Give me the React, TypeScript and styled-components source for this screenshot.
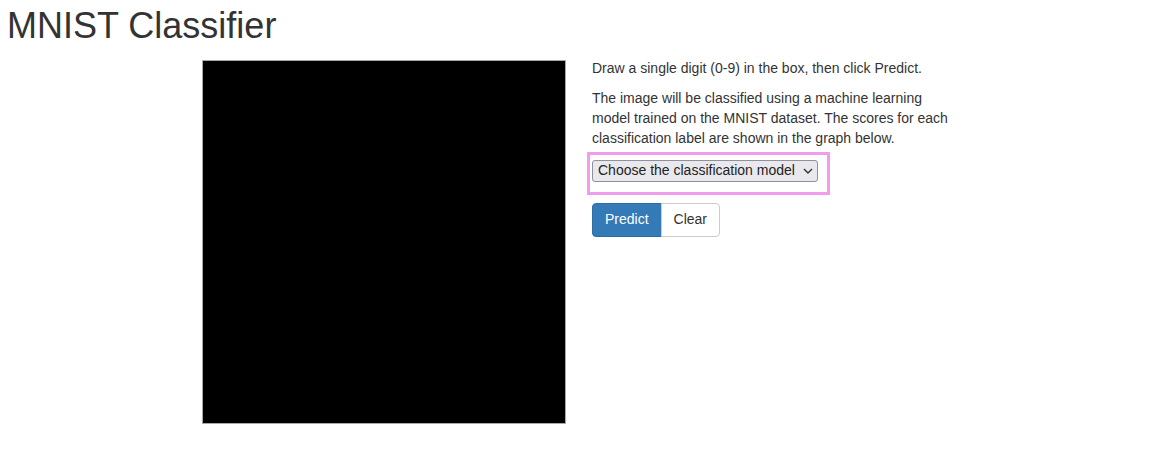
import styled, { createGlobalStyle } from "styled-components";

const GlobalStyle = createGlobalStyle`
  body {
    margin: 0;
    background: #fff;
    font-family: "Liberation Sans", Arial, sans-serif;
    font-size: 14px;
    line-height: 1.42857;
    color: #333;
  }
`;

const Page = styled.div`
  padding: 0 6px;
`;

const Title = styled.h1`
  margin: 6px 0 14px 1px;
  font-size: 36px;
  font-weight: 500;
  line-height: 1.1;
  color: #333;
`;

const Row = styled.div`
  display: flex;
  justify-content: center;
  gap: 26px;
`;

const Canvas = styled.div`
  width: 362px;
  height: 362px;
  background: #000;
  border: 1px solid #a8a8a8;
  flex: none;
`;

const Side = styled.div`
  width: 360px;
  flex: none;
  margin-top: -1px;
`;

const Text = styled.p`
  margin: 0 0 10px;
`;

const Highlight = styled.div`
  position: relative;
  width: 226px;
  margin: 11px 0 21px;

  &::after {
    content: "";
    position: absolute;
    top: -8px;
    left: -5px;
    right: -12px;
    bottom: -13px;
    border: 3px solid #f29cf0;
    pointer-events: none;
  }
`;

const Select = styled.div`
  display: flex;
  align-items: center;
  justify-content: space-between;
  box-sizing: border-box;
  width: 226px;
  height: 22px;
  padding: 0 4px 0 5px;
  background: #e9e9ed;
  border: 1px solid #8f8f9d;
  border-radius: 3px;
  font-size: 14px;
  color: #222;
  white-space: nowrap;
`;

const BtnGroup = styled.div`
  display: flex;
`;

const Button = styled.button<{ $primary?: boolean }>`
  font-family: inherit;
  font-size: 14px;
  line-height: 1.42857;
  padding: 6px 12px;
  border: 1px solid ${(p) => (p.$primary ? "#2e6da4" : "#ccc")};
  background: ${(p) => (p.$primary ? "#337ab7" : "#fff")};
  color: ${(p) => (p.$primary ? "#fff" : "#333")};
  border-radius: ${(p) => (p.$primary ? "4px 0 0 4px" : "0 4px 4px 0")};
  margin-left: ${(p) => (p.$primary ? "0" : "-1px")};
  cursor: pointer;
`;

export default function App() {
  return (
    <Page>
      <GlobalStyle />
      <Title>MNIST Classifier</Title>
      <Row>
        <Canvas />
        <Side>
          <Text>Draw a single digit (0-9) in the box, then click Predict.</Text>
          <Text>
            The image will be classified using a machine learning model trained
            on the MNIST dataset. The scores for each classification label are
            shown in the graph below.
          </Text>
          <Highlight>
            <Select>
              <span>Choose the classification model</span>
              <svg width="10" height="6" viewBox="0 0 10 6">
                <path d="M1 1l4 4 4-4" fill="none" stroke="#333" strokeWidth="1.4" />
              </svg>
            </Select>
          </Highlight>
          <BtnGroup>
            <Button $primary>Predict</Button>
            <Button>Clear</Button>
          </BtnGroup>
        </Side>
      </Row>
    </Page>
  );
}
